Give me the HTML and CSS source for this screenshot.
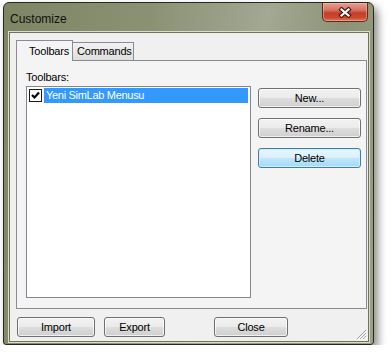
FILE: index.html
```html
<!DOCTYPE html>
<html lang="en">
<head>
    <meta charset="UTF-8">
    <title>Customize</title>
    <link rel="stylesheet" href="styles.css">
</head>
<body>
    <div class="window">
        <div class="titlebar">
            <span class="title">Customize</span>
            <button class="close-btn" title="Close">
                <svg width="16" height="11" viewBox="0 0 16 11">
                    <path d="M4.5 2.5 L11.5 8.5 M11.5 2.5 L4.5 8.5" stroke="#4a1a12" stroke-width="4.4" stroke-linecap="square"/>
                    <path d="M4.5 2.5 L11.5 8.5 M11.5 2.5 L4.5 8.5" stroke="#ffffff" stroke-width="2.2" stroke-linecap="square"/>
                </svg>
            </button>
        </div>

        <div class="client">
            <div class="tabs">
                <div class="tab active">Toolbars</div>
                <div class="tab">Commands</div>
            </div>

            <div class="tab-panel">
                <div class="list-col">
                    <div class="label">Toolbars:</div>
                    <div class="listbox">
                        <div class="list-item">
                            <span class="check">
                                <svg width="11" height="11" viewBox="0 0 11 11">
                                    <path d="M2 5 L4.5 7.5 L9 2.5" fill="none" stroke="#000" stroke-width="2.2"/>
                                </svg>
                            </span>
                            <span class="item-text">Yeni SimLab Menusu</span>
                        </div>
                    </div>
                </div>
                <div class="side-buttons">
                    <button class="btn">New...</button>
                    <button class="btn">Rename...</button>
                    <button class="btn default">Delete</button>
                </div>
            </div>

            <div class="bottom-buttons">
                <button class="btn import">Import</button>
                <button class="btn export">Export</button>
                <button class="btn closeb">Close</button>
            </div>

            <svg class="grip" width="12" height="12" viewBox="0 0 12 12">
                <path d="M11 2 L2 11 M11 5 L5 11 M11 8 L8 11" stroke="#a0a0a0" stroke-width="1"/>
                <path d="M12 3 L3 12 M12 6 L6 12 M12 9 L9 12" stroke="#ffffff" stroke-width="1"/>
            </svg>
        </div>
    </div>
</body>
</html>
```

FILE: styles.css
```css
body {
    margin: 0;
    background: #ffffff;
    font-family: 'Liberation Sans', Arial, sans-serif;
    font-size: 11px;
    color: #000;
}

.window {
    box-sizing: border-box;
    width: 371px;
    height: 343px;
    margin: 2px 0 0 3px;
    border: 1px solid #262a1e;
    border-radius: 6px 6px 3px 3px;
    background: linear-gradient(100deg, #7d8563 0%, #8b9274 35%, #a2a892 62%, #8d9476 80%, #9aa183 100%);
    box-shadow: 4px 5px 8px rgba(0, 0, 0, 0.45);
    display: flex;
    flex-direction: column;
}

.titlebar {
    height: 28px;
    display: flex;
    justify-content: space-between;
    align-items: flex-start;
}

.title {
    margin: 9px 0 0 6px;
    font-size: 12px;
    color: #111;
}

.close-btn {
    width: 46px;
    height: 19px;
    margin-right: 5px;
    padding: 0;
    border: 1px solid #5b2a20;
    border-top: none;
    border-radius: 0 0 5px 5px;
    background: linear-gradient(#e3a092 0%, #d8725e 40%, #c2402a 55%, #c9482e 80%, #dd7a58 100%);
    box-shadow: inset 0 0 0 1px rgba(255, 200, 180, 0.45);
    display: flex;
    align-items: center;
    justify-content: center;
}

.client {
    position: relative;
    box-sizing: border-box;
    width: 360px;
    height: 310px;
    margin: 1px 0 0 5px;
    border: 1px solid #6d7160;
    background: #f0f0f0;
    box-shadow: 0 0 0 1px #d9ddcc;
    display: flex;
    flex-direction: column;
}

.tabs {
    display: flex;
    align-items: flex-end;
    height: 20px;
    margin: 7px 0 0 6px;
}

.tab {
    box-sizing: border-box;
    height: 18px;
    padding: 2px 4px 0;
    border: 1px solid #898c95;
    border-bottom: none;
    background: linear-gradient(#f2f2f2, #dedede);
    letter-spacing: -0.2px;
}

.tab.active {
    position: relative;
    z-index: 1;
    width: 57px;
    height: 21px;
    margin-bottom: -1px;
    padding: 4px 0 0 12px;
    background: #f4f4f4;
}

.tab + .tab {
    border-left: none;
    width: 61px;
    padding-left: 4px;
}

.tab-panel {
    box-sizing: border-box;
    width: 351px;
    height: 249px;
    margin-left: 6px;
    border: 1px solid #898c95;
    background: #f4f4f4;
    display: flex;
    padding: 10px 0 0 9px;
    gap: 7px;
}

.label {
    height: 15px;
    letter-spacing: -0.2px;
}

.listbox {
    box-sizing: border-box;
    width: 225px;
    height: 212px;
    border: 1px solid #828790;
    background: #ffffff;
    padding: 1px 2px 0 2px;
}

.list-item {
    display: flex;
    align-items: center;
    height: 15px;
}

.check {
    box-sizing: border-box;
    width: 13px;
    height: 13px;
    border: 1px solid #1c1c1c;
    background: #fff;
    display: flex;
    align-items: center;
    justify-content: center;
    margin-right: 2px;
}

.item-text {
    flex: 1;
    height: 15px;
    line-height: 15px;
    padding-left: 2px;
    background: #3399ff;
    color: #fff;
    letter-spacing: -0.3px;
}

.side-buttons {
    display: flex;
    flex-direction: column;
    gap: 10px;
    padding-top: 17px;
}

.btn {
    box-sizing: border-box;
    height: 20px;
    width: 103px;
    padding: 0;
    border: 1px solid #707070;
    border-radius: 3px;
    background: linear-gradient(#f2f2f2 0%, #ebebeb 48%, #dddddd 52%, #cfcfcf 100%);
    box-shadow: inset 0 0 0 1px rgba(255, 255, 255, 0.7);
    font-family: 'Liberation Sans', Arial, sans-serif;
    font-size: 11px;
    color: #000;
    letter-spacing: -0.2px;
}

.btn.default {
    border-color: #3c7fb1;
    background: linear-gradient(#eaf6fd 0%, #d9f0fc 48%, #bee6fd 52%, #a7d9f5 100%);
    box-shadow: inset 0 0 0 1px #cdeefb;
}

.bottom-buttons {
    display: flex;
    margin: 8px 0 0 7px;
}

.btn.import { width: 78px; }
.btn.export { width: 61px; margin-left: 9px; }
.btn.closeb { width: 74px; margin-left: 49px; }

.grip {
    position: absolute;
    right: 1px;
    bottom: 1px;
}
```
